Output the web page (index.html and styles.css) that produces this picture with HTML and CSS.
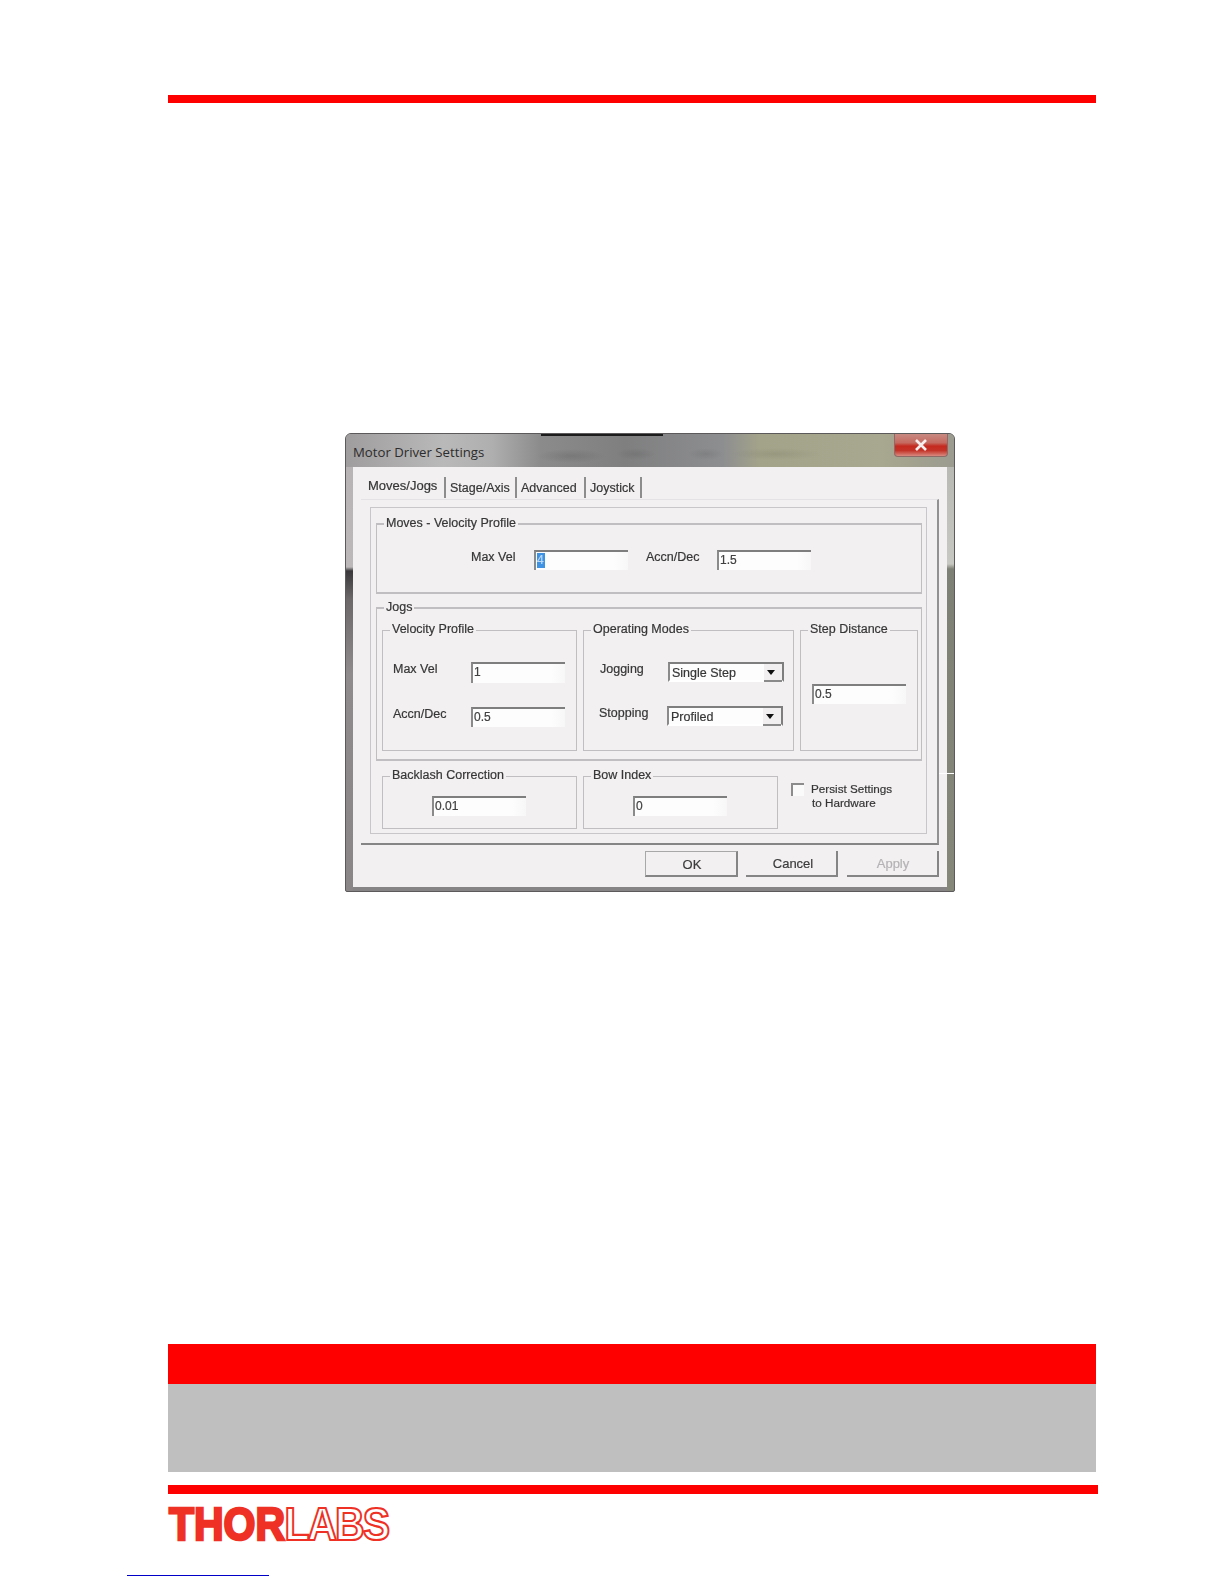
FILE: index.html
```html
<!DOCTYPE html>
<html lang="en">
<head>
<meta charset="utf-8">
<title>Motor Driver Settings</title>
<link rel="stylesheet" href="styles.css">
</head>
<body>
<div class="page">
  <div class="rule-top"></div>

  <div class="dialog">
    <div class="titlebar">
      <span class="title">Motor Driver Settings</span>
      <span class="close">
        <svg width="16" height="14" viewBox="0 0 16 14"><path d="M3 2 13 12M13 2 3 12" stroke="#f4efee" stroke-width="2.6" fill="none"/></svg>
      </span>
    </div>
    <div class="panel">
      <div class="tabs">
        <span class="tab tab-active">Moves/Jogs</span>
        <span class="tab">Stage/Axis</span>
        <span class="tab">Advanced</span>
        <span class="tab">Joystick</span>
      </div>
      <div class="sheet">
        <div class="outer">
          <fieldset class="moves">
            <legend>Moves - Velocity Profile</legend>
            <div class="moves-row">
              <span class="label moves-l1">Max Vel</span>
              <span class="field"><span class="sel">4</span></span>
              <span class="label moves-l2">Accn/Dec</span>
              <span class="field">1.5</span>
            </div>
          </fieldset>
          <fieldset class="jogs">
            <legend>Jogs</legend>
            <div class="jog-row">
              <fieldset class="vel">
                <legend>Velocity Profile</legend>
                <div class="vel-body">
                  <div class="row"><span class="label vel-l">Max Vel</span><span class="field tall">1</span></div>
                  <div class="row"><span class="label vel-l">Accn/Dec</span><span class="field">0.5</span></div>
                </div>
              </fieldset>
              <fieldset class="modes">
                <legend>Operating Modes</legend>
                <div class="modes-body">
                  <div class="row"><span class="label modes-l">Jogging</span>
                    <span class="combo tall"><span class="combo-text">Single Step</span><span class="arrow"></span></span></div>
                  <div class="row row-shift"><span class="label modes-l">Stopping</span>
                    <span class="combo"><span class="combo-text">Profiled</span><span class="arrow"></span></span></div>
                </div>
              </fieldset>
              <fieldset class="step">
                <legend>Step Distance</legend>
                <div class="step-body"><span class="field">0.5</span></div>
              </fieldset>
            </div>
          </fieldset>
          <div class="bottom-row">
            <fieldset class="small">
              <legend>Backlash Correction</legend>
              <div class="small-body"><span class="field">0.01</span></div>
            </fieldset>
            <fieldset class="small">
              <legend>Bow Index</legend>
              <div class="small-body"><span class="field">0</span></div>
            </fieldset>
            <div class="persist">
              <span class="check"></span>
              <span class="persist-text">Persist Settings<br><span class="persist-2">to Hardware</span></span>
            </div>
          </div>
        </div>
      </div>
      <div class="buttons">
        <span class="btn btn-ok">OK</span>
        <span class="btn btn-cancel">Cancel</span>
        <span class="btn btn-apply">Apply</span>
      </div>
    </div>
  </div>

  <div class="band-red"></div>
  <div class="band-grey"></div>
  <div class="rule-bottom"></div>
  <svg class="logo" width="226" height="36" viewBox="0 0 226 36" role="img" aria-label="Thorlabs">
    <g transform="scale(1 1.146)">
      <text class="logo-thor" x="2" y="29.6">THOR</text>
      <text class="logo-labs" x="117.5" y="29.6">LABS</text>
    </g>
  </svg>
  <div class="link-line"></div>
</div>
</body>
</html>
```
FILE: styles.css
```css
* { box-sizing: border-box; }
html, body { margin: 0; padding: 0; background: #fff; }
.page { width: 1224px; height: 1584px; overflow: hidden; padding-top: 95px; font-family: "Liberation Sans", Arial, sans-serif; }

.rule-top { height: 8px; width: 928px; margin-left: 168px; background: #f00; }

.dialog {
  position: relative;
  width: 610px; height: 459px;
  margin: 330px 0 0 345px;
  padding: 0 7px 5px;
  border: 1px solid #5c5a5a;
  border-radius: 6px 6px 2px 2px;
  background:
    linear-gradient(to bottom, #b6b2b4 0, #bcb8ba 133px, #3a383a 137px, #6c686a 165px, #8f8b8d 240px, #8a8688 100%) left top / 7px 100% no-repeat,
    linear-gradient(to bottom, #b4b4ae 0, #c8c8c2 130px, #7d8074 135px, #858879 100%) right top / 7px 100% no-repeat,
    #868484;
  filter: blur(0.45px);
}
.dialog::after { content: ""; position: absolute; right: 0; top: 339px; width: 15px; height: 1px; background: #fff; }

.titlebar {
  display: flex; justify-content: space-between; align-items: flex-start;
  height: 33px;
  margin: 0 -7px;
  padding: 0 6px 0 7px;
  border-radius: 5px 5px 0 0;
  background:
    radial-gradient(ellipse 34px 7px at 225px 22px, rgba(70,70,70,.22), transparent),
    radial-gradient(ellipse 20px 6px at 290px 20px, rgba(70,70,70,.18), transparent),
    radial-gradient(ellipse 18px 6px at 360px 20px, rgba(70,70,70,.16), transparent),
    radial-gradient(ellipse 46px 6px at 430px 20px, rgba(80,80,60,.14), transparent),
    linear-gradient(#1c1c1c, #1c1c1c) 195px 0 / 122px 2px no-repeat,
    linear-gradient(to right, #9f9d9d 0, #bab9b9 16%, #b0afaf 24%, #8c8b8b 32%, #7f7f80 46%, #8d8e90 62%, #a3a38a 68%, #a8a78f 88%, #9b9b90 100%);
}
.title { margin-top: 9px; font-family: "Open Sans", "Liberation Sans", sans-serif; font-size: 13.2px; line-height: 18px; color: #2c2c2c; white-space: nowrap; }
.close {
  display: flex; align-items: center; justify-content: center;
  width: 54px; height: 23px;
  border: 1px solid #8e6a66; border-top: 0;
  border-radius: 0 0 4px 4px;
  background: linear-gradient(to bottom, #c78a82 0, #c66a60 40%, #c5291f 55%, #c43328 75%, #d88a80 100%);
}

.panel { height: 420px; padding: 0 8px; background: #f3f0f2; color: #363636; font-size: 12.5px; -webkit-text-stroke: 0.2px; }

.tabs { display: grid; grid-template-columns: 78px 71px 69px 56px; height: 32px; margin-left: 7px; padding-top: 10px; }
.tab { height: 21px; line-height: 23px; padding-left: 4px; border-right: 2px solid #8c8c8c; white-space: nowrap; }
.tab-active { padding-left: 0; line-height: 17px; font-size: 13px; }

.sheet { width: 578px; padding: 7px 10px 9px 9px; border-top: 1px solid #e4e2e4; border-right: 2px solid #929292; border-bottom: 2px solid #858585; }
.outer { height: 327px; padding: 8px 4px 0 5px; border: 1px solid #c8c6c8; }

fieldset { min-width: 0; margin: 0; padding: 0; border: 1px solid #c0bec0; }
legend { height: 16px; margin-left: 7px; padding: 0 2px; line-height: 15px; white-space: nowrap; color: #363636; }

.moves { height: 78px; border-width: 2px 1px 2px 1px; }
.moves-row { display: flex; padding: 18px 0 0 94px; }
.moves-l1 { width: 63px; }
.moves-l2 { width: 71px; margin-left: 18px; }

.jogs { height: 161px; margin-top: 6px; border-width: 2px 1px 2px 1px; }
.jog-row { display: flex; gap: 6px; padding: 6px 0 0 5px; }
.vel { width: 195px; height: 129px; }
.vel-body { padding: 24px 0 0 10px; }
.modes { width: 211px; height: 129px; }
.modes-body { padding: 24px 0 0 16px; }
.step { width: 118px; height: 129px; }
.step-body { padding: 46px 0 0 11px; }

.row { display: flex; margin-bottom: 24px; }
.row-shift { margin-left: -1px; }
.label { line-height: 14px; white-space: nowrap; }
.vel-l { width: 78px; }
.modes-l { width: 68px; }

.field {
  display: block;
  width: 94px; height: 20px;
  padding-left: 1px;
  line-height: 16px; font-size: 12px;
  border-top: 2px solid #7e7e7e; border-left: 2px solid #8a8a8a;
  background: linear-gradient(to right, #fdfdfd 85%, #f8f7f8 100%);
  color: #404040;
}
.tall { height: 21px; }
.sel { display: inline-block; width: 8px; line-height: 15px; background: #3f93e4; color: #bcd9f5; }

.combo {
  display: flex; justify-content: space-between;
  width: 116px; height: 20px;
  border-top: 2px solid #7e7e7e; border-left: 2px solid #8a8a8a; border-right: 2px solid #7e7e7e; border-bottom: 2px solid #fff;
  background: #fdfdfd;
}
.combo-text { padding-left: 2px; line-height: 19px; font-size: 12.5px; }
.arrow { position: relative; width: 18px; height: 18px; background: #f1eff0; border-bottom: 2px solid #8a8a8a; margin-bottom: -2px; }
.arrow::after { content: ""; position: absolute; left: 3px; top: 6px; border: 4px solid transparent; border-top: 5px solid #111; border-bottom: 0; }

.bottom-row { display: flex; gap: 6px; margin-top: 7px; padding-left: 6px; }
.small { width: 195px; height: 61px; }
.small-body { padding: 12px 0 0 49px; }

.persist { display: flex; gap: 7px; margin: 14px 0 0 7px; font-size: 11.7px; line-height: 14px; }
.check { width: 13px; height: 13px; margin-top: 1px; border-top: 2px solid #8c8c8c; border-left: 2px solid #8c8c8c; background: #fbfafb; }
.persist-text { white-space: nowrap; }
.persist-2 { margin-left: 1px; }

.buttons { display: flex; justify-content: flex-end; gap: 8px; padding-top: 6px; }
.btn { height: 26px; line-height: 25px; text-align: center; font-size: 13px; color: #3c3c3c; }
.btn-ok { width: 93px; padding-left: 2px; border: 2px solid #858585; border-top-width: 1px; border-left-width: 1px; border-left-color: #a8a8a8; border-top-color: #a8a8a8; }
.btn-cancel { width: 92px; padding-left: 4px; border-right: 2px solid #858585; border-bottom: 2px solid #858585; }
.btn-apply { width: 92px; margin-left: 1px; padding-left: 2px; color: #b4b2b4; border-right: 2px solid #858585; border-bottom: 2px solid #858585; }

.band-red { width: 928px; height: 40px; margin: 452px 0 0 168px; background: #f00; }
.band-grey { width: 928px; height: 88px; margin-left: 168px; background: #bfbfbf; }
.rule-bottom { width: 930px; height: 9px; margin: 13px 0 0 168px; background: #f00; }

.logo { display: block; margin: 12px 0 0 167px; overflow: visible; }
.logo-thor { font: 700 41px "Liberation Sans", Arial, sans-serif; fill: #ee3124; stroke: #ee3124; stroke-width: 2.2px; }
.logo-labs { font: 700 41px "Liberation Sans", Arial, sans-serif; letter-spacing: -2px; fill: #fff; stroke: #ee3124; stroke-width: 1.9px; }

.link-line { width: 142px; height: 1px; margin: 33px 0 0 127px; background: #0000c8; }
```
